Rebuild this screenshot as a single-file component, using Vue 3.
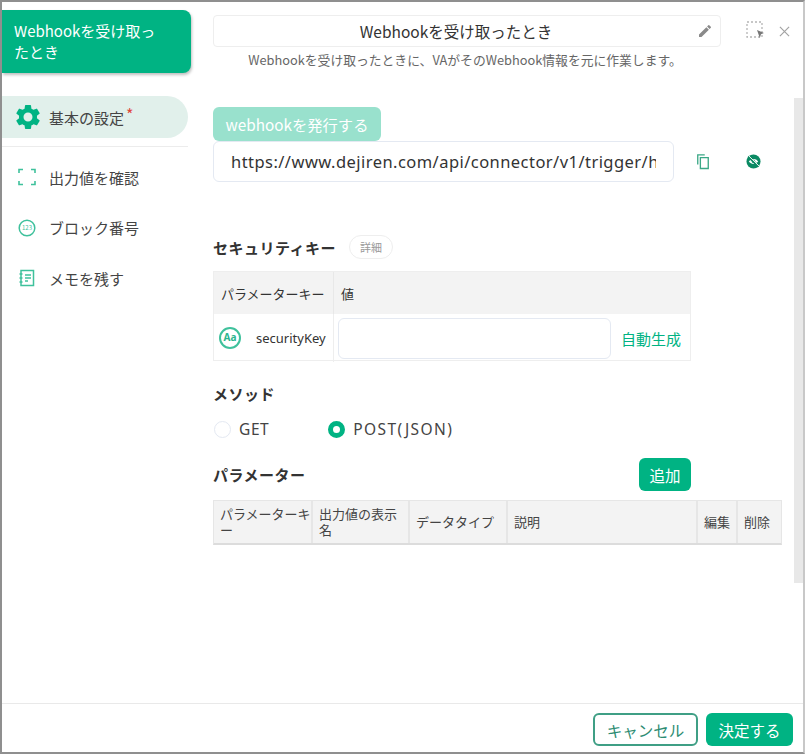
<template>
  <div class="dialog">
    <div class="body">
      <aside class="side">
        <div class="trigger">Webhookを受け取ったとき</div>
        <div class="nav-active">
          <svg class="gear" viewBox="0 0 24 24"><path d="M19.14 12.94c.04-.3.06-.61.06-.94s-.02-.64-.07-.94l2.03-1.58a.49.49 0 0 0 .12-.61l-1.92-3.32a.49.49 0 0 0-.59-.22l-2.39.96a7 7 0 0 0-1.62-.94l-.36-2.54a.48.48 0 0 0-.48-.41h-3.84a.47.47 0 0 0-.47.41l-.36 2.54c-.59.24-1.13.57-1.62.94l-2.39-.96a.48.48 0 0 0-.59.22L2.74 8.87a.48.48 0 0 0 .12.61l2.03 1.58c-.05.3-.09.63-.09.94s.02.64.07.94l-2.03 1.58a.49.49 0 0 0-.12.61l1.92 3.32c.12.22.37.29.59.22l2.39-.96c.5.38 1.03.7 1.62.94l.36 2.54c.05.24.24.41.48.41h3.84c.24 0 .44-.17.47-.41l.36-2.54a7 7 0 0 0 1.62-.94l2.39.96c.22.08.47 0 .59-.22l1.92-3.32a.47.47 0 0 0-.12-.61zM12 15.6a3.6 3.6 0 1 1 0-7.2 3.6 3.6 0 0 1 0 7.2z"/></svg>
          <span>基本の設定</span><i class="req">*</i>
        </div>
        <div class="nav-line"></div>
        <div class="nav-item first">
          <svg class="nav-icon" viewBox="0 0 18 18" fill="none" stroke="#3fc19c" stroke-width="1.6"><path d="M1 5V1.5h4M13 1.5h4V5M17 13v3.5h-4M5 16.5H1V13"/></svg>
          <span>出力値を確認</span>
        </div>
        <div class="nav-item">
          <svg class="nav-icon" viewBox="0 0 18 18" fill="none" stroke="#3fc19c"><circle cx="9" cy="9" r="7.8" stroke-width="1.5"/><text x="9" y="11.200" text-anchor="middle" font-size="6" fill="#3fc19c" stroke="none">123</text></svg>
          <span>ブロック番号</span>
        </div>
        <div class="nav-item">
          <svg class="nav-icon" viewBox="0 0 18 18" fill="none" stroke="#3fc19c" stroke-width="1.5"><path d="M3 1.5h12.5v15H3zM1.5 5h3M1.5 9h3M1.5 13h3M7 6h6M7 9h6M7 12h3"/></svg>
          <span>メモを残す</span>
        </div>
      </aside>

      <main class="main">
        <div class="title-row">
          <div class="title-box">
            <span>Webhookを受け取ったとき</span>
            <svg class="pencil" viewBox="0 0 24 24"><path d="M3 17.25V21h3.75L17.81 9.94l-3.75-3.75zM20.71 7.04a1 1 0 0 0 0-1.41l-2.34-2.34a1 1 0 0 0-1.41 0l-1.83 1.83 3.75 3.75z"/></svg>
          </div>
          <svg class="select-icon" viewBox="0 0 20 20" fill="none"><rect x="1" y="1" width="15" height="15" stroke="#b5b5b5" stroke-width="1.3" stroke-dasharray="2 2"/><path d="M11 9l7 3-3 1.2L13.800 17z" fill="#777"/></svg>
          <svg class="close-icon" viewBox="0 0 12 12" fill="none" stroke="#a3a3a3" stroke-width="1.3"><path d="M1 1l10 10M11 1L1 11"/></svg>
        </div>
        <p class="desc">Webhookを受け取ったときに、VAがそのWebhook情報を元に作業します。</p>

        <button class="fire-btn">webhookを発行する</button>
        <div class="url-row">
          <div class="url-box"><span>https://www.dejiren.com/api/connector/v1/trigger/hook/x8a2c</span></div>
          <svg class="copy-icon" viewBox="0 0 16 18" fill="none" stroke="#3aa886" stroke-width="1.5"><path d="M2 12.500V1.500h8"/><path d="M5 4.500h9V17H5z"/></svg>
          <svg class="eye-icon" viewBox="0 0 16 16"><circle cx="8" cy="8" r="7.500" fill="#0a8a63"/><path d="M3 8c2.500-3.500 7.500-3.500 10 0-2.500 3.500-7.500 3.500-10 0z" fill="#fff"/><circle cx="8" cy="8" r="1.700" fill="#0a8a63"/><path d="M2.500 2.500l11 11" stroke="#0a8a63" stroke-width="2.600"/><path d="M3 2l11 11" stroke="#fff" stroke-width="1"/></svg>
        </div>

        <div class="sec-head">
          <h3>セキュリティキー</h3>
          <span class="pill">詳細</span>
        </div>
        <div class="key-table">
          <div class="kh kh-first">パラメーターキー</div>
          <div class="kh">値</div>
          <div class="kd kd-first">
            <span class="aa">Aa</span>
            <span class="key-name">securityKey</span>
          </div>
          <div class="kd kd-val">
            <div class="key-input"></div>
            <span class="auto">自動生成</span>
          </div>
        </div>

        <h3 class="method-title">メソッド</h3>
        <div class="radios">
          <label class="radio"><i class="dot"></i>GET</label>
          <label class="radio radio-post"><i class="dot on"></i>POST(JSON)</label>
        </div>

        <div class="param-head">
          <h3>パラメーター</h3>
          <button class="add-btn">追加</button>
        </div>
        <div class="param-table">
          <div v-for="c in cols" :key="c" class="pc">{{ c }}</div>
        </div>
      </main>
    </div>

    <footer class="foot">
      <button class="cancel">キャンセル</button>
      <button class="ok">決定する</button>
    </footer>
    <div class="scrollbar"></div>
  </div>
</template>

<script setup>
const cols = ['パラメーターキー', '出力値の表示名', 'データタイプ', '説明', '編集', '削除']
</script>

<style>
html, body { margin: 0; background: #fff; }
</style>

<style scoped>
* { box-sizing: border-box; }

.dialog {
  position: relative;
  width: 805px;
  height: 754px;
  display: flex;
  flex-direction: column;
  background: #fff;
  border-top: 2px solid #8f8f8f;
  border-left: 2px solid #8f8f8f;
  border-right: 2px solid #c8c8c8;
  border-bottom: 2px solid #8f8f8f;
  font-family: "Noto Sans CJK JP", "Liberation Sans", sans-serif;
  color: #333;
  overflow: hidden;
}

.body {
  flex: 1;
  display: flex;
  min-height: 0;
}

.side {
  width: 211px;
  padding-top: 8px;
}

.trigger {
  width: 189px;
  height: 63px;
  padding: 10px 24px 0 12px;
  background: #00b383;
  border-radius: 0 8px 8px 0;
  box-shadow: 1px 2px 3px rgba(0, 0, 0, .25);
  color: #fff;
  font-size: 15px;
  line-height: 21px;
}

.nav-active {
  width: 186px;
  height: 42px;
  margin-top: 23px;
  padding-left: 13px;
  display: flex;
  align-items: center;
  background: #e1f0eb;
  border-radius: 0 21px 21px 0;
  font-size: 15px;
  color: #444;
}

.gear {
  width: 30px;
  height: 30px;
  margin-right: 6px;
  margin-left: -2px;
  fill: #00b383;
}

.req {
  font-style: normal;
  color: #e0463a;
  font-size: 16px;
  margin-left: 2px;
  margin-top: -6px;
}

.nav-line {
  width: 186px;
  height: 1px;
  margin-top: 8px;
  background: #ececec;
}

.nav-item {
  height: 50.500px;
  padding-left: 16px;
  display: flex;
  align-items: center;
  gap: 13px;
  font-size: 15px;
  color: #444;
}

.nav-item.first { margin-top: 5px; }

.nav-icon {
  width: 18px;
  height: 18px;
}

.main {
  flex: 1;
  padding: 13px 0 0 0;
  min-width: 0;
}

.title-row {
  display: flex;
  align-items: center;
}

.title-box {
  position: relative;
  width: 508px;
  height: 32px;
  padding-right: 22px;
  border: 1px solid #eee;
  border-radius: 4px;
  display: flex;
  align-items: center;
  justify-content: center;
  font-size: 15.500px;
  color: #333;
}

.pencil {
  position: absolute;
  right: 7px;
  top: 7px;
  width: 16px;
  height: 16px;
  fill: #8a8a8a;
}

.select-icon {
  width: 20px;
  height: 20px;
  margin-left: 25px;
}

.close-icon {
  width: 11px;
  height: 11px;
  margin-left: 13px;
}

.desc {
  width: 504px;
  margin: 4px 0 0;
  text-align: center;
  font-size: 12.800px;
  line-height: 18px;
  color: #666;
}

.fire-btn {
  display: block;
  width: 168px;
  height: 34px;
  margin-top: 38px;
  border: 0;
  border-radius: 6px;
  background: #99e1cd;
  color: #fff;
  font: inherit;
  font-size: 15.300px;
}

.url-row {
  display: flex;
  align-items: center;
}

.url-box {
  width: 461px;
  height: 41px;
  padding: 0 17px;
  border: 1px solid #e4e9f2;
  border-radius: 6px;
  font-size: 16.500px;
  font-family: "Noto Sans", "Noto Sans CJK JP", sans-serif;
  letter-spacing: .45px;
  line-height: 40px;
  color: #333;
}

.url-box span {
  display: block;
  overflow: hidden;
  white-space: nowrap;
}

.copy-icon {
  width: 14px;
  height: 17px;
  margin-left: 22px;
}

.eye-icon {
  width: 15px;
  height: 15px;
  margin-left: 36px;
}

.sec-head {
  display: flex;
  align-items: center;
  margin-top: 53px;
  height: 24px;
}

h3 {
  margin: 0;
  font-size: 15px;
  font-weight: 700;
  color: #333;
  letter-spacing: .5px;
}

.pill {
  width: 44px;
  height: 24px;
  margin-left: 13px;
  border: 1px solid #eee;
  border-radius: 12px;
  text-align: center;
  line-height: 22px;
  font-size: 11px;
  color: #999;
}

.key-table {
  width: 478px;
  height: 90px;
  margin-top: 12px;
  display: grid;
  grid-template-columns: 120px 1fr;
  grid-template-rows: 42px 48px;
  border: 1px solid #eeeeee;
}

.kh {
  background: #f3f3f3;
  display: flex;
  align-items: center;
  padding-left: 7px;
  font-size: 13px;
  color: #333;
}

.kh-first {
  border-right: 1px solid #e8e8e8;
  white-space: nowrap;
}

.kd-first {
  border-right: 1px solid #eee;
  display: flex;
  align-items: center;
  padding-left: 5px;
}

.aa {
  width: 22px;
  height: 22px;
  border: 2px solid #3fc19c;
  border-radius: 50%;
  color: #2bb58e;
  font-family: "Noto Sans", sans-serif;
  font-size: 10px;
  font-weight: 700;
  line-height: 17px;
  text-align: center;
}

.key-name {
  margin-left: 15px;
  font-family: "Noto Sans", sans-serif;
  font-size: 13px;
  color: #333;
}

.kd-val {
  display: flex;
  align-items: center;
  padding-left: 4px;
}

.key-input {
  width: 273px;
  height: 41px;
  border: 1px solid #e4e9f2;
  border-radius: 6px;
}

.auto {
  margin-left: 10px;
  font-size: 15px;
  color: #00b383;
  white-space: nowrap;
}

.method-title {
  margin-top: 23px;
  line-height: 20px;
}

.radios {
  display: flex;
  margin-top: 15px;
  height: 20px;
  align-items: center;
}

.radio {
  display: flex;
  align-items: center;
  gap: 8px;
  font-family: "Noto Sans", sans-serif;
  font-size: 15.500px;
  color: #444;
  letter-spacing: .6px;
}

.radio-post {
  margin-left: 58px;
  letter-spacing: 1.400px;
}

.dot {
  width: 17px;
  height: 17px;
  margin-left: 1px;
  border: 1px solid #e4e9f2;
  border-radius: 50%;
}

.dot.on {
  border: 5px solid #00b383;
}

.param-head {
  width: 478px;
  height: 33px;
  margin-top: 19px;
  display: flex;
  align-items: center;
  justify-content: space-between;
}

.add-btn {
  width: 52px;
  height: 33px;
  border: 0;
  border-radius: 6px;
  background: #00b383;
  color: #fff;
  font: inherit;
  font-size: 15.500px;
}

.param-table {
  width: 569px;
  height: 45px;
  margin-top: 9px;
  display: grid;
  grid-template-columns: 99px 97px 98px 190px 40px 45px;
  background: #f3f3f3;
  border: 1px solid #e6e6e6;
  border-bottom: 2px solid #dcdcdc;
}

.pc {
  padding: 0 0 0 6px;
  display: flex;
  align-items: center;
  border-right: 2px solid #e6e6e6;
  font-size: 13px;
  line-height: 16px;
  color: #444;
}

.pc:last-child { border-right: 0; }

.foot {
  height: 49px;
  flex: none;
  border-top: 1px solid #e9e9e9;
  display: flex;
  justify-content: flex-end;
  gap: 8px;
  padding: 9px 10px 0 0;
}

.cancel, .ok {
  height: 33px;
  border-radius: 6px;
  font: inherit;
  font-size: 15.500px;
}

.cancel {
  width: 105px;
  background: #fff;
  border: 2px solid #3f9f85;
  color: #2d8c72;
}

.ok {
  width: 87px;
  background: #00b383;
  border: 0;
  color: #fff;
}

.scrollbar {
  position: absolute;
  right: 0;
  top: 96px;
  width: 9px;
  height: 485px;
  background: #e8e8e8;
}
</style>
